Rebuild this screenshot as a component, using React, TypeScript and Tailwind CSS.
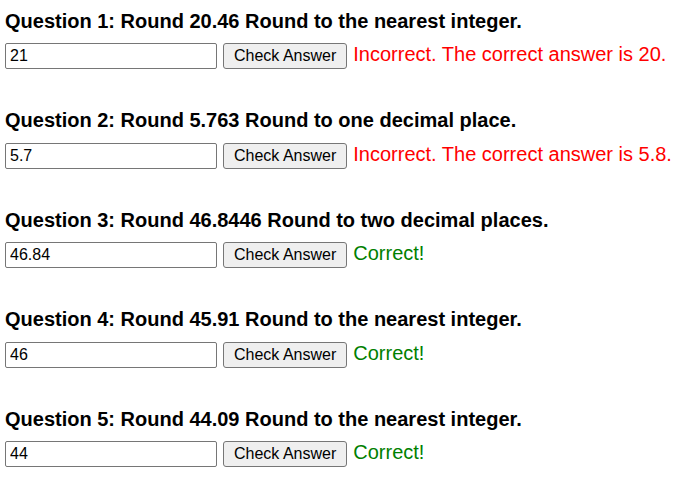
import React from "react";

const questions = [
  { q: "Question 1: Round 20.46 Round to the nearest integer.", a: "21", ok: false, fb: "Incorrect. The correct answer is 20." },
  { q: "Question 2: Round 5.763 Round to one decimal place.", a: "5.7", ok: false, fb: "Incorrect. The correct answer is 5.8." },
  { q: "Question 3: Round 46.8446 Round to two decimal places.", a: "46.84", ok: true, fb: "Correct!" },
  { q: "Question 4: Round 45.91 Round to the nearest integer.", a: "46", ok: true, fb: "Correct!" },
  { q: "Question 5: Round 44.09 Round to the nearest integer.", a: "44", ok: true, fb: "Correct!" },
];

export default function App() {
  return (
    <div
      className="bg-white text-black pt-[9.6px] px-[5px] w-[682px] h-[494px] overflow-hidden"
      style={{ fontFamily: '"Liberation Sans", Arial, sans-serif' }}
    >
      {questions.map((item, i) => (
        <div key={i} className="mb-[40.2px]">
          <h3 className="text-[20px] font-bold leading-[23px] mb-[10.4px]">{item.q}</h3>
          <div className="flex items-baseline gap-[6px] h-[26px]">
            <input
              readOnly
              value={item.a}
              className="w-[212px] h-[26px] border border-[#767676] rounded-[2px] px-[4px] text-[16px] text-black bg-white outline-none"
            />
            <button className="h-[26px] px-[10px] border border-[#767676] rounded-[3px] bg-[#efefef] text-[16px] text-black">
              Check Answer
            </button>
            <span className={"text-[20px] leading-[23px] " + (item.ok ? "text-[#008000]" : "text-[#ff0000]")}>{item.fb}</span>
          </div>
        </div>
      ))}
    </div>
  );
}
